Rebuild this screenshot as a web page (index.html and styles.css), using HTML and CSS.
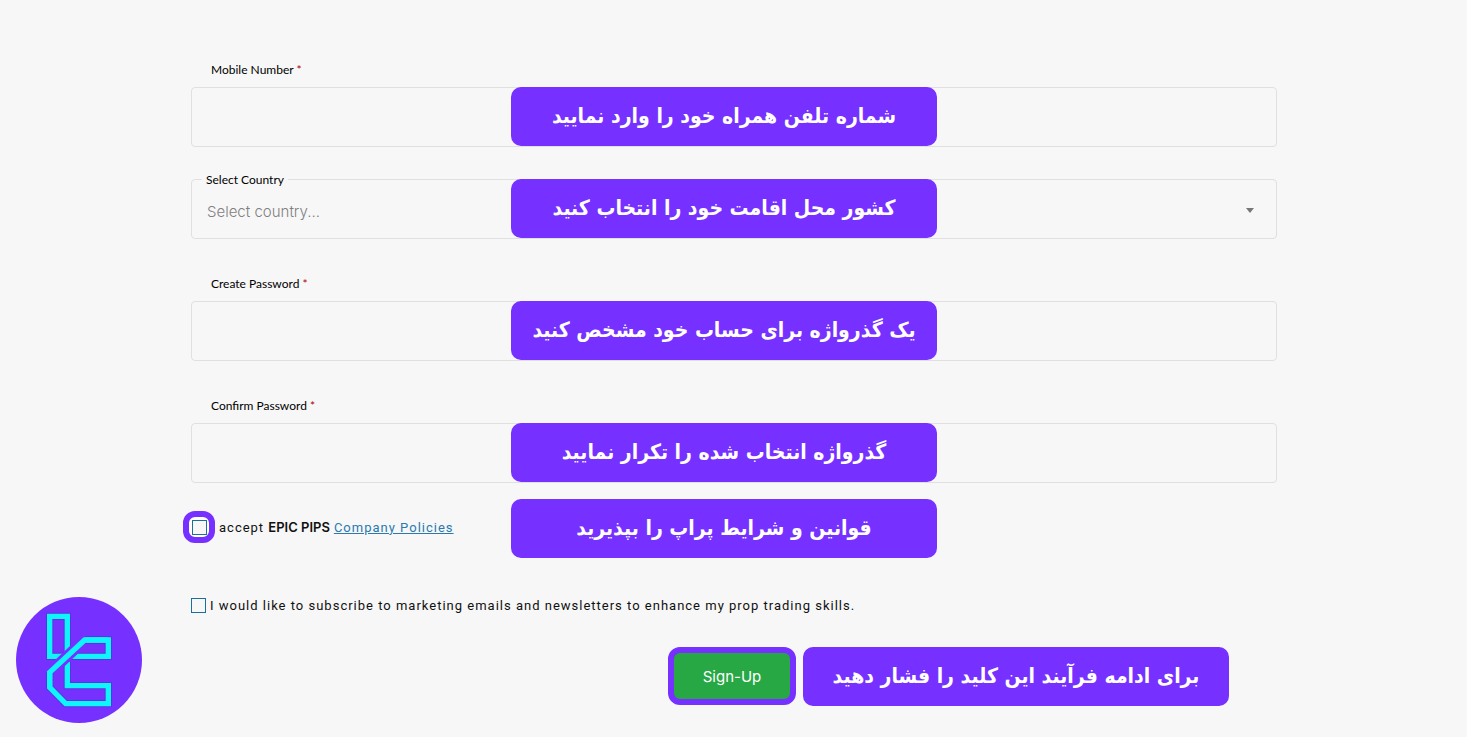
FILE: index.html
```html
<!DOCTYPE html>
<html lang="en">
<head>
    <meta charset="UTF-8">
    <meta name="viewport" content="width=device-width, initial-scale=1.0">
    <title>Sign-Up</title>
    <link rel="stylesheet" href="styles.css">
</head>
<body>
    <form class="signup">
        <div class="field">
            <label for="mobile">Mobile Number <span class="required">*</span></label>
            <div class="control">
                <input type="tel" id="mobile">
                <div class="hint" lang="fa" dir="rtl">شماره تلفن همراه خود را وارد نمایید</div>
            </div>
        </div>

        <div class="field field-select">
            <label for="country">Select Country</label>
            <div class="control">
                <select id="country">
                    <option>Select country...</option>
                </select>
                <svg class="arrow" viewBox="0 0 8 5"><path d="M0 0h8L4 5z" fill="#777"/></svg>
                <div class="hint" lang="fa" dir="rtl">کشور محل اقامت خود را انتخاب کنید</div>
            </div>
        </div>

        <div class="field">
            <label for="password">Create Password <span class="required">*</span></label>
            <div class="control">
                <input type="password" id="password">
                <div class="hint" lang="fa" dir="rtl">یک گذرواژه برای حساب خود مشخص کنید</div>
            </div>
        </div>

        <div class="field">
            <label for="confirm">Confirm Password <span class="required">*</span></label>
            <div class="control">
                <input type="password" id="confirm">
                <div class="hint" lang="fa" dir="rtl">گذرواژه انتخاب شده را تکرار نمایید</div>
            </div>
        </div>

        <div class="check policies">
            <span class="ring"><input type="checkbox" id="accept"></span>
            <label for="accept">accept <strong>EPIC PIPS</strong></label>
            <a href="#">Company Policies</a>
            <div class="hint" lang="fa" dir="rtl">قوانین و شرایط پراپ را بپذیرید</div>
        </div>

        <div class="check">
            <input type="checkbox" id="newsletter">
            <label for="newsletter">I would like to subscribe to marketing emails and newsletters to enhance my prop trading skills.</label>
        </div>

        <div class="actions">
            <button type="submit">Sign-Up</button>
            <div class="hint hint-inline" lang="fa" dir="rtl">برای ادامه فرآیند این کلید را فشار دهید</div>
        </div>
    </form>

    <!-- Logo -->
    <svg class="logo" viewBox="48 21 378 378" fill="none">
        <circle cx="237" cy="210" r="189" fill="#7630ff"/>
        <g>
            <path d="M202 210V79H149V199H190M215 199H325V150H254M149 247V292L197 341H325V287H202V215" stroke="#5a35d8" stroke-width="22"/>
            <path d="M202 210V79H149V199H190M215 199H325V150H254M149 247V292L197 341H325V287H202V215" stroke="#0ff5ff" stroke-width="16"/>
            <path d="M160 238L246 157" stroke="#7630ff" stroke-width="33"/>
            <path d="M325 150H254L149 247V292" stroke="#0ff5ff" stroke-width="16"/>
        </g>
    </svg>
</body>
</html>
```
FILE: styles.css
```css
* {
    box-sizing: border-box;
}

body {
    margin: 0;
    background: #f7f7f7;
    color: #111;
    font-family: Lato, "Liberation Sans", sans-serif;
    font-size: 12px;
}

.signup {
    padding: 60px 190px 30px 191px;
}

.field {
    margin-bottom: 32px;
}

.field label {
    display: block;
    height: 20px;
    margin: 0 0 7px 20px;
    color: #000;
    line-height: 20px;
}

.field + .field:not(.field-select) {
    margin-top: 35px;
}

.required {
    color: #a00;
}

.control {
    position: relative;
}

.control input,
.control select {
    display: block;
    width: 100%;
    height: 60px;
    padding: 4px 16px 0;
    border: 1px solid #e0e0e0;
    border-radius: 4px;
    background: transparent;
    color: #808080;
    font-family: Inter, sans-serif;
    font-size: 15px;
    font-weight: 300;
    appearance: none;
    outline: none;
}

.control select {
    padding-left: 15px;
}

/* label sits on the border of the select */
.field-select {
    position: relative;
}

.field-select label {
    position: absolute;
    z-index: 1;
    top: -9px;
    left: 11px;
    margin: 0;
    padding: 0 4px;
    background: #f7f7f7;
}

.arrow {
    position: absolute;
    top: 29px;
    right: 23px;
    width: 8px;
    height: 5px;
}

.hint {
    position: absolute;
    top: 0;
    left: 320px;
    width: 426px;
    height: 59px;
    border-radius: 10px;
    background: #7630ff;
    color: #fff;
    font-family: "DejaVu Sans Condensed", "DejaVu Sans", sans-serif;
    font-size: 21px;
    font-weight: bold;
    line-height: 59px;
    text-align: center;
    white-space: nowrap;
}

.hint-inline {
    position: static;
}

.check {
    position: relative;
    display: flex;
    align-items: center;
    gap: 4px;
    height: 32px;
    font-family: Roboto, sans-serif;
    font-size: 13px;
    letter-spacing: 1px;
}

.check input {
    width: 15px;
    height: 15px;
    margin: 0;
    border: 1px solid #1b6f9c;
    background: #f7f7f7;
    appearance: none;
}

.check strong {
    font-family: Inter, sans-serif;
    font-weight: 600;
    letter-spacing: 0;
}

.check a {
    color: #2a7ab0;
}

.policies {
    margin: -4px 0 46px -8px;
}

.policies .hint {
    top: -12px;
    left: 328px;
    letter-spacing: 0;
}

.ring {
    display: flex;
    align-items: center;
    justify-content: center;
    width: 32px;
    height: 32px;
    border: 6px solid #7630ff;
    border-radius: 12px;
    background: #fff;
}

.actions {
    display: flex;
    gap: 7px;
    margin: 26px 48px 0 0;
    justify-content: flex-end;
}

.actions button {
    width: 128px;
    height: 58px;
    border: 6px solid #7630ff;
    border-radius: 12px;
    background: #28a745;
    color: #fff;
    font-family: Inter, sans-serif;
    font-size: 15px;
}

.logo {
    position: fixed;
    bottom: 14px;
    left: 16px;
    width: 126px;
    height: 126px;
}
```
